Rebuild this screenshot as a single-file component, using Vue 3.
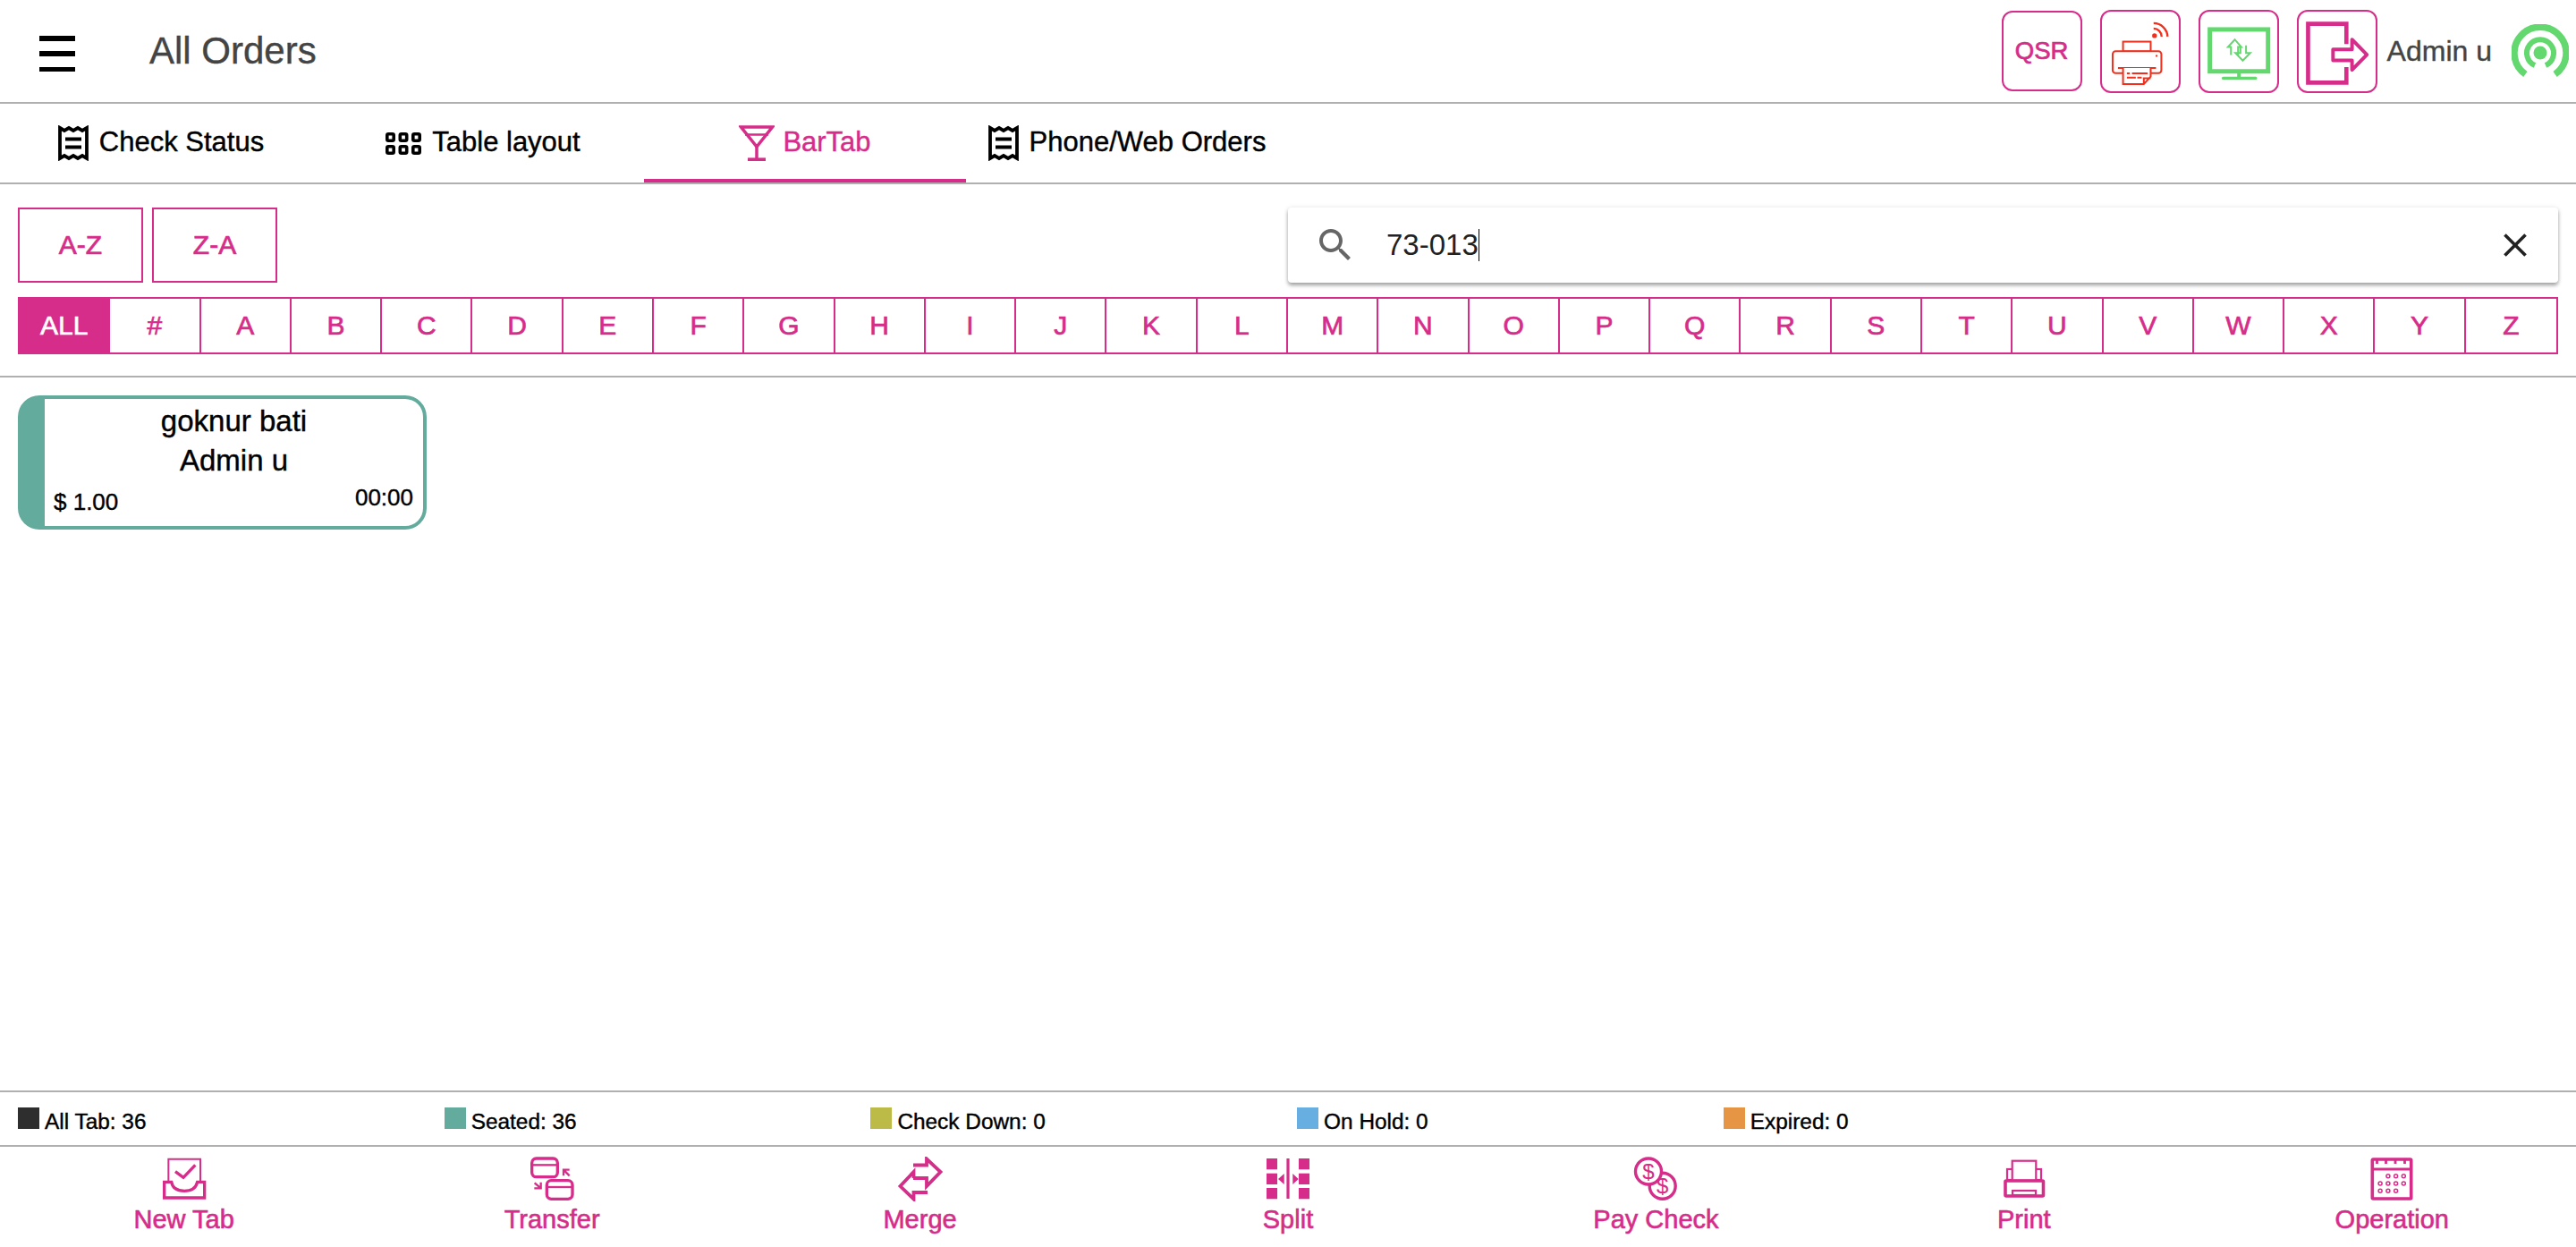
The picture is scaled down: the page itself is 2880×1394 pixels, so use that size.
<script setup>
const letters = ['ALL', '#', ...'ABCDEFGHIJKLMNOPQRSTUVWXYZ']
const statuses = [
  { label: 'All Tab: 36', color: '#2e2e2e' },
  { label: 'Seated: 36', color: '#62ab9d' },
  { label: 'Check Down: 0', color: '#bcbb48' },
  { label: 'On Hold: 0', color: '#67afe0' },
  { label: 'Expired: 0', color: '#e69545' }
]
const dots = [
  [25.9, 21.7], [34.6, 21.7], [43.3, 21.7],
  [17.1, 30], [25.9, 30], [34.6, 30], [43.3, 30],
  [17.1, 38.3], [25.9, 38.3], [34.6, 38.3]
]
</script>

<template>
  <div class="page">
    <header class="topbar">
      <svg class="burger" width="40" height="40" viewBox="0 0 40 40"><rect width="40" height="6" /><rect y="17" width="40" height="6" /><rect y="35" width="40" height="5" /></svg>
      <h1 class="title">All Orders</h1>
      <div class="top-actions">
        <button class="square qsr">QSR</button>
        <button class="square">
          <svg width="86" height="89" viewBox="31 21 259 268" fill="none" stroke="#f0301c" stroke-width="6">
            <rect x="102" y="122" width="93" height="33" />
            <rect x="67" y="154" width="164" height="74" rx="10" fill="#fff" />
            <circle cx="215" cy="170" r="3.5" fill="#f0301c" stroke="none" />
            <path d="M85 211H213" />
            <path d="M102 211V265H172L195 240V211M172 265V245H195" fill="#fff" />
            <path d="M115 229H125M132 229H185M115 243H145M150 243H165" />
            <circle cx="208" cy="102" r="8" fill="#f0301c" stroke="none" />
            <path d="M205 78A27 27 0 0 1 232 105M205 60A47 47 0 0 1 252 105" stroke-width="7" />
          </svg>
        </button>
        <button class="square">
          <svg width="86" height="89" viewBox="364 21 255 268" fill="none" stroke="#63d86f">
            <rect x="394" y="81" width="196" height="141" stroke-width="15" />
            <path d="M492 228V245" stroke-width="12" />
            <path d="M439 245H548" stroke-width="10" stroke-linecap="round" />
            <path d="M465 167V140H455L478 115L500 140H489V167M497 135V160H480L505 186L530 160H516V135" stroke-width="6" />
          </svg>
        </button>
        <button class="square">
          <svg width="86" height="89" viewBox="694 21 256 268" fill="none" stroke="#d62c8a">
            <path d="M853 130V62H724V260H853V208" stroke-width="14" />
            <path d="M808 148H872V115L922 166L872 217V185H808Z" stroke-width="12" stroke-linejoin="round" />
          </svg>
        </button>
        <span class="user">Admin u</span>
        <svg class="signal" width="64" height="60" viewBox="0 0 64 60" fill="none" stroke="#63d86f">
          <path d="M15.4 56A29 29 0 1 1 48.6 56" stroke-width="7.5" />
          <path d="M26 46A15 15 0 1 1 38 46" stroke-width="6" />
          <circle cx="32" cy="32" r="7.5" fill="#63d86f" stroke="none" />
        </svg>
      </div>
    </header>

    <nav class="tabs">
      <a class="tab">
        <svg width="34" height="40" viewBox="0 0 34 40" fill="none" stroke="#000" stroke-width="3.8"><path d="M2 3L7 6L12 3L17 6L22 3L27 6L32 3V37L27 34L22 37L17 34L12 37L7 34L2 37Z" /><path d="M8 15.5H26M8 24.5H26" stroke-width="4" /></svg>
        <span>Check Status</span>
      </a>
      <a class="tab">
        <svg width="40" height="25" viewBox="0 0 40 25" fill="none" stroke="#000" stroke-width="3.6">
          <rect x="1.8" y="1.8" width="7.4" height="7.4" rx="1.5" /><rect x="16.3" y="1.8" width="7.4" height="7.4" rx="1.5" /><rect x="30.8" y="1.8" width="7.4" height="7.4" rx="1.5" />
          <rect x="1.8" y="15.8" width="7.4" height="7.4" rx="1.5" /><rect x="16.3" y="15.8" width="7.4" height="7.4" rx="1.5" /><rect x="30.8" y="15.8" width="7.4" height="7.4" rx="1.5" />
        </svg>
        <span>Table layout</span>
      </a>
      <a class="tab active">
        <svg class="martini" width="40" height="40" viewBox="0 0 40 40" fill="none" stroke="#d62c8a" stroke-width="3.5"><path d="M2.5 2H37.5L20 24Z" /><path d="M7 10.5H33" stroke-width="2.5" /><path d="M20 24V37" /><path d="M10 38.2H30" stroke-width="3.6" /></svg>
        <span>BarTab</span>
      </a>
      <a class="tab">
        <svg width="34" height="40" viewBox="0 0 34 40" fill="none" stroke="#000" stroke-width="3.8"><path d="M2 3L7 6L12 3L17 6L22 3L27 6L32 3V37L27 34L22 37L17 34L12 37L7 34L2 37Z" /><path d="M8 15.5H26M8 24.5H26" stroke-width="4" /></svg>
        <span>Phone/Web Orders</span>
      </a>
    </nav>

    <section class="controls">
      <div class="control-row">
        <div class="sorters">
          <button class="sort">A-Z</button>
          <button class="sort">Z-A</button>
        </div>
        <div class="search">
          <svg class="search-icon" width="48" height="48" viewBox="0 0 24 24" fill="#666"><path d="M15.5 14h-.79l-.28-.27C15.41 12.59 16 11.11 16 9.5 16 5.91 13.09 3 9.5 3S3 5.91 3 9.5 5.91 16 9.5 16c1.61 0 3.09-.59 4.23-1.57l.27.28v.79l5 4.99L20.49 19l-4.99-5zm-6 0C7.01 14 5 11.99 5 9.5S7.01 5 9.5 5 14 7.01 14 9.5 11.99 14 9.5 14z" /></svg>
          <span class="query">73-013</span><span class="caret"></span>
          <svg class="clear" width="44" height="44" viewBox="0 0 24 24" fill="#222"><path d="M19 6.41L17.59 5 12 10.59 6.41 5 5 6.41 10.59 12 5 17.59 6.41 19 12 13.41 17.59 19 19 17.59 13.41 12z" /></svg>
        </div>
      </div>
      <div class="alphabet">
        <button v-for="(l, i) in letters" :key="l" class="letter" :class="{ on: i === 0 }">{{ l }}</button>
      </div>
    </section>

    <main class="grid">
      <article class="card">
        <div class="name">goknur bati</div>
        <div class="name">Admin u</div>
        <div class="card-foot"><span class="amount">$ 1.00</span><span>00:00</span></div>
      </article>
    </main>

    <section class="legend">
      <div v-for="s in statuses" :key="s.label" class="legend-item">
        <i class="swatch" :style="{ background: s.color }"></i>{{ s.label }}
      </div>
    </section>

    <footer class="actions">
      <button class="action">
        <svg width="60" height="50" viewBox="-12 10 180 150" fill="none" stroke="#d62c8a" stroke-width="10">
          <path d="M25 92V18H132V92" stroke-width="6" />
          <path d="M48 60L75 80L115 38" />
          <path d="M35 95H11V148H146V95H122Q115 125 78 125Q40 125 35 95Z" />
        </svg>
        <span>New Tab</span>
      </button>
      <button class="action">
        <svg width="60" height="50" viewBox="1221 10 180 150" fill="none" stroke="#d62c8a" stroke-width="10">
          <rect x="1244" y="16" width="86" height="62" rx="15" /><path d="M1244 38H1330" stroke-width="7" />
          <rect x="1294" y="90" width="86" height="62" rx="15" /><path d="M1294 112H1380" stroke-width="7" />
          <path d="M1350 74V54H1370M1350 54L1370 74M1252 116H1274V96M1274 116L1253 98" stroke-width="7" />
        </svg>
        <span>Transfer</span>
      </button>
      <button class="action">
        <svg width="60" height="50" viewBox="0 0 60 50" fill="none" stroke="#d62c8a" stroke-width="3.8">
          <path d="M22 9.5H37V2.5L52.5 17L37 33V24H22" />
          <path d="M38 40H22.5V47.5L7.5 33L22.5 17V24" />
        </svg>
        <span>Merge</span>
      </button>
      <button class="action">
        <svg width="60" height="50" viewBox="0 0 60 50" fill="#d62c8a">
          <rect x="6" y="2" width="12" height="12.3" /><rect x="6" y="18.7" width="12" height="12.3" /><rect x="6" y="35" width="12" height="12.3" />
          <rect x="42" y="2" width="12" height="12.3" /><rect x="42" y="18.7" width="12" height="12.3" /><rect x="42" y="35" width="12" height="12.3" />
          <rect x="28.4" y="2" width="3.2" height="45" />
          <path d="M19 25L25.7 19V31ZM41.7 25L35.3 19V31Z" />
        </svg>
        <span>Split</span>
      </button>
      <button class="action">
        <svg width="60" height="50" viewBox="0 0 60 50" fill="#fff" stroke="#d62c8a" stroke-width="3.4">
          <circle cx="37.7" cy="32.7" r="14.5" /><circle cx="22" cy="16.5" r="14.5" />
          <text x="37.7" y="41" class="coin">$</text><text x="22" y="24.8" class="coin">$</text>
        </svg>
        <span>Pay Check</span>
      </button>
      <button class="action">
        <svg width="60" height="50" viewBox="0 0 60 50" fill="none" stroke="#d62c8a" stroke-width="2.2">
          <rect x="11" y="14" width="38" height="12" /><rect x="16.7" y="4.7" width="26.6" height="22" fill="#fff" />
          <rect x="9" y="27" width="42.5" height="17" rx="1" stroke-width="3.6" /><rect x="17" y="38" width="26" height="5" />
        </svg>
        <span>Print</span>
      </button>
      <button class="action">
        <svg width="60" height="50" viewBox="0 0 60 50" fill="none" stroke="#d62c8a" stroke-width="3.6">
          <rect x="8.3" y="3" width="43.4" height="44" rx="1" />
          <path d="M8 14H52" stroke-width="2.8" /><path d="M13.5 3V8M23.5 3V8M34 3V8M44.5 3V8" stroke-width="2.8" />
          <circle v-for="d in dots" :key="d.join()" :cx="d[0]" :cy="d[1]" r="2" stroke-width="1.5" />
        </svg>
        <span>Operation</span>
      </button>
    </footer>
  </div>
</template>

<style scoped>
.page {
  height: 1394px;
  display: flex;
  flex-direction: column;
  background: #fff;
  color: #000;
  font-family: "Liberation Sans", Arial, sans-serif;
  -webkit-text-stroke: 0.4px;
}
button {
  font: inherit;
  color: inherit;
  background: none;
  border: 0;
  padding: 0;
}
.topbar {
  height: 116px;
  flex: none;
  box-sizing: border-box;
  border-bottom: 2px solid #b0b0b0;
  display: flex;
  align-items: center;
  padding: 0 8px 0 44px;
}
.burger { fill: #000; flex: none; margin-top: 6px; }
.title {
  margin: 0 0 0 83px;
  font-size: 42px;
  font-weight: 400;
  color: #444;
}
.top-actions {
  margin-left: auto;
  display: flex;
  align-items: center;
}
.square {
  width: 90px;
  height: 93px;
  box-sizing: border-box;
  margin-left: 20px;
  border: 2px solid #d62c8a;
  border-radius: 12px;
  display: flex;
  align-items: center;
  justify-content: center;
}
.qsr {
  height: 90px;
  margin-left: 0;
  color: #d62c8a;
  font-size: 27.5px;
  -webkit-text-stroke: 0.7px;
}
.user {
  margin-left: 11px;
  font-size: 32px;
  color: #444;
}
.signal { margin-left: 22px; flex: none; }
.tabs {
  height: 90px;
  flex: none;
  box-sizing: border-box;
  border-bottom: 2px solid #b0b0b0;
  display: flex;
}
.tab {
  width: 360px;
  box-sizing: border-box;
  padding-top: 4px;
  border-bottom: 4px solid transparent;
  display: flex;
  align-items: center;
  justify-content: center;
  gap: 12px;
  font-size: 31px;
}
.tab span { margin-top: -3px; }
.tab.active {
  color: #d62c8a;
  border-bottom-color: #d62c8a;
  gap: 9px;
}
.controls {
  height: 216px;
  flex: none;
  box-sizing: border-box;
  padding: 26px 20px 0;
  border-bottom: 2px solid #b0b0b0;
}
.control-row {
  display: flex;
  justify-content: space-between;
}
.sorters { display: flex; gap: 10px; }
.sort {
  width: 140px;
  height: 84px;
  box-sizing: border-box;
  border: 2px solid #d62c8a;
  color: #d62c8a;
  font-size: 30px;
  -webkit-text-stroke: 0.7px;
}
.search {
  width: 1420px;
  height: 84px;
  box-sizing: border-box;
  padding: 0 0 0 29px;
  border-radius: 4px;
  box-shadow: 0 3px 4px rgba(0, 0, 0, 0.35), 0 0 6px rgba(0, 0, 0, 0.08);
  display: flex;
  align-items: center;
}
.search-icon { flex: none; }
.query {
  margin-left: 33px;
  font-size: 33px;
  color: #222;
  -webkit-text-stroke: 0;
}
.caret {
  width: 1.5px;
  height: 36px;
  background: #000;
}
.clear {
  margin-left: auto;
  margin-right: 26px;
}
.alphabet {
  margin-top: 16px;
  height: 64px;
  box-sizing: border-box;
  display: grid;
  grid-template-columns: repeat(28, 1fr);
  border: 2px solid #d62c8a;
}
.letter {
  color: #d62c8a;
  font-size: 30px;
  border-right: 2px solid #d62c8a;
  -webkit-text-stroke: 0.7px;
}
.letter:last-child { border-right: 0; }
.letter.on {
  background: #d62c8a;
  color: #fff;
}
.grid {
  flex: 1;
  padding: 20px;
}
.card {
  width: 457px;
  height: 150px;
  box-sizing: border-box;
  border: 4px solid #62ab9d;
  border-left-width: 30px;
  border-radius: 24px;
  padding-top: 3px;
  font-size: 33px;
  text-align: center;
}
.name { line-height: 44px; }
.card-foot {
  margin-top: 4px;
  padding: 0 11px 0 10px;
  display: flex;
  justify-content: space-between;
  align-items: flex-start;
  font-size: 26px;
  line-height: 30px;
}
.amount { margin-top: 5px; }
.legend {
  flex: none;
  height: 63px;
  box-sizing: border-box;
  border-top: 2px solid #b0b0b0;
  border-bottom: 2px solid #b0b0b0;
  padding: 17px 0 0 20px;
  display: flex;
  font-size: 24.4px;
  line-height: 24px;
}
.legend-item { width: 476.7px; }
.swatch {
  display: inline-block;
  width: 24px;
  height: 24px;
  margin-right: 6px;
}
.actions {
  flex: none;
  height: 112px;
  box-sizing: border-box;
  padding-top: 11px;
  display: grid;
  grid-template-columns: repeat(7, 1fr);
}
.action {
  display: flex;
  flex-direction: column;
  align-items: center;
  justify-content: flex-start;
  color: #d62c8a;
  font-size: 29px;
  line-height: 32px;
  gap: 4px;
  -webkit-text-stroke: 0.6px;
}
.coin {
  font-family: "Liberation Sans", Arial, sans-serif;
  font-size: 24px;
  text-anchor: middle;
  fill: #d62c8a;
  stroke: none;
  -webkit-text-stroke: 0;
}
</style>
